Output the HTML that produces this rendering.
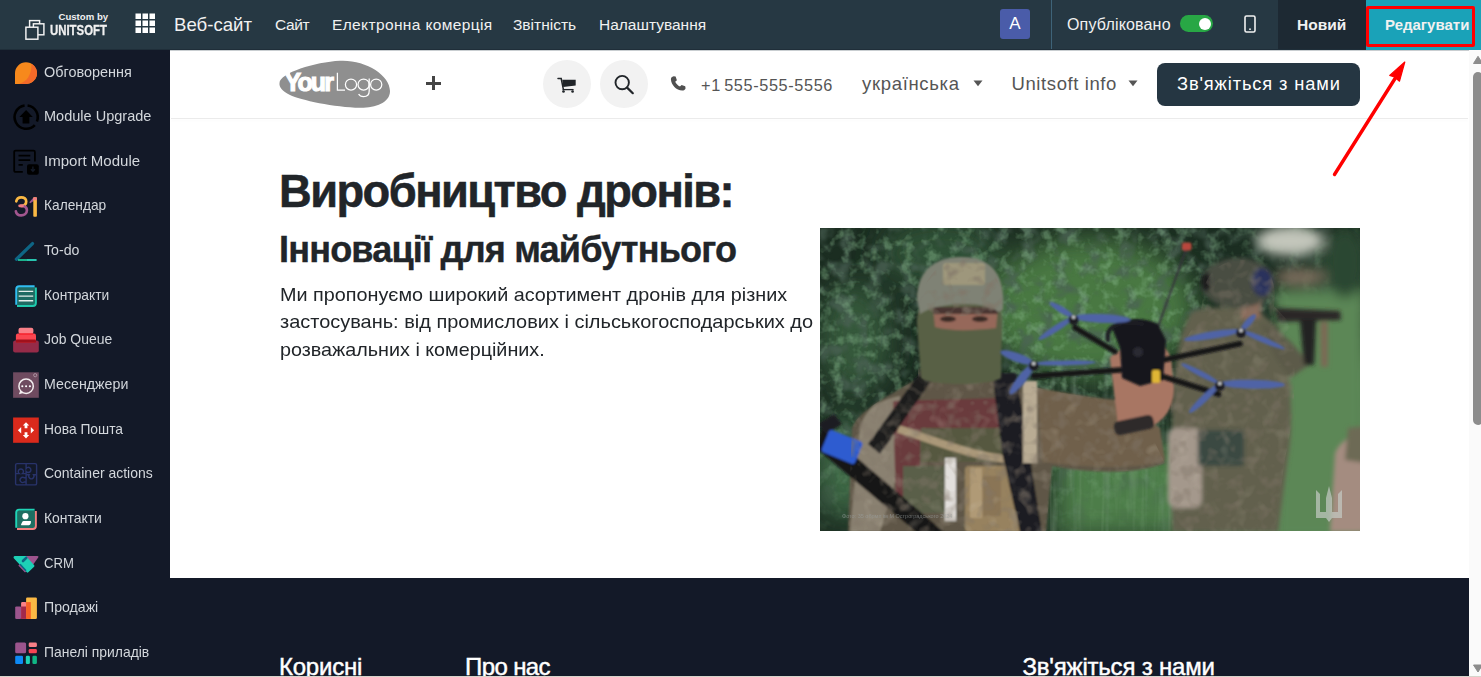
<!DOCTYPE html>
<html><head><meta charset="utf-8">
<style>
*{margin:0;padding:0;box-sizing:border-box}
html,body{width:1481px;height:677px;overflow:hidden;background:#fff;font-family:"Liberation Sans",sans-serif}
.a{position:absolute;white-space:nowrap}
#nav{position:absolute;left:0;top:0;width:1481px;height:50px;background:#263843}
#nav .t{position:absolute;color:#f1f1f1;white-space:nowrap;line-height:1}
#side{position:absolute;left:0;top:50px;width:170px;height:627px;background:#131928}
.si{position:absolute;left:44px;color:#d3d7dc;font-size:14.6px;line-height:1;white-space:nowrap}
.ic{position:absolute;left:14px;width:24px;height:24px}
#site{position:absolute;left:170px;top:50px;width:1299px;height:627px;background:#fff;overflow:hidden}
#hdr{position:absolute;left:0;top:0;width:1299px;height:68px;background:#fff;border-bottom:1px solid #e9e9e9}
.gr{color:#555}
#foot{position:absolute;left:0;top:528px;width:1299px;height:99px;background:#131928}
#sb{position:absolute;left:1469px;top:50px;width:12px;height:627px;background:#fbfbfb;border-left:1px solid #f0f0f0}
</style></head><body>
<div id="nav">
  <!-- logo -->
  <svg class="a" style="left:24px;top:18px" width="22" height="23" viewBox="0 0 22 23">
    <rect x="5.6" y="2.6" width="10" height="8" fill="none" stroke="#f4f4f4" stroke-width="1.45"/>
    <rect x="9.4" y="5.8" width="10.5" height="11" fill="#263843" stroke="#f4f4f4" stroke-width="1.45"/>
    <rect x="1.9" y="9.2" width="12" height="12" fill="#263843" stroke="#f4f4f4" stroke-width="1.45"/>
  </svg>
  <div class="t" style="left:58.5px;top:12px;font-size:9.6px;font-weight:bold">Custom by</div>
  <div class="t" style="left:50px;top:23px;font-size:14.8px;font-weight:bold;-webkit-text-stroke:0.3px #f1f1f1;transform:scaleX(0.77);transform-origin:0 0">UNITSOFT</div>
  <!-- grid -->
  <svg class="a" style="left:134.5px;top:13.3px" width="21" height="21" viewBox="0 0 21 21" fill="#fff">
    <rect x="0.5" y="0.5" width="5.5" height="5.5"/><rect x="7.5" y="0.5" width="5.5" height="5.5"/><rect x="14.5" y="0.5" width="5.5" height="5.5"/>
    <rect x="0.5" y="7.5" width="5.5" height="5.5"/><rect x="7.5" y="7.5" width="5.5" height="5.5"/><rect x="14.5" y="7.5" width="5.5" height="5.5"/>
    <rect x="0.5" y="14.5" width="5.5" height="5.5"/><rect x="7.5" y="14.5" width="5.5" height="5.5"/><rect x="14.5" y="14.5" width="5.5" height="5.5"/>
  </svg>
  <div class="t" style="left:174px;top:15.5px;font-size:18.6px">Веб-сайт</div>
  <div class="t" style="left:275px;top:17px;font-size:15.5px;letter-spacing:-0.35px">Сайт</div>
  <div class="t" style="left:332px;top:17px;font-size:15.5px;letter-spacing:0.37px">Електронна комерція</div>
  <div class="t" style="left:513px;top:17px;font-size:15.5px">Звітність</div>
  <div class="t" style="left:599px;top:17px;font-size:15.5px">Налаштування</div>
  <div class="a" style="left:1000px;top:8.5px;width:30px;height:30px;background:#4a5ca9;border-radius:3px;color:#fff;font-size:17px;line-height:30px;text-align:center">A</div>
  <div class="a" style="left:1051px;top:0;width:1px;height:50px;background:#3e6378"></div>
  <div class="t" style="left:1067px;top:16.7px;font-size:16px;letter-spacing:0.17px">Опубліковано</div>
  <div class="a" style="left:1180px;top:15px;width:33px;height:17px;background:#28a745;border-radius:9px"></div>
  <div class="a" style="left:1199px;top:17.5px;width:12px;height:12px;background:#fff;border-radius:50%"></div>
  <svg class="a" style="left:1243px;top:15px" width="14" height="18" viewBox="0 0 14 18">
    <rect x="2" y="1" width="10" height="16" rx="1.5" fill="none" stroke="#f1f1f1" stroke-width="1.6"/>
    <circle cx="7" cy="14.2" r="0.9" fill="#f1f1f1"/>
  </svg>
  <div class="a" style="left:1278px;top:0;width:88px;height:50px;background:#1d2933"></div>
  <div class="t" style="left:1297px;top:16.7px;font-size:15.5px;font-weight:bold">Новий</div>
  <div class="a" style="left:1366px;top:0;width:115px;height:50px;background:#1aa2b8"></div>
  <div class="a" style="left:1366px;top:49px;width:115px;height:1px;background:#1aa2b8"></div>
  <div class="t" style="left:1385px;top:17px;font-size:15px;font-weight:bold">Редагувати</div>
  <div class="a" style="left:1366px;top:6px;width:109px;height:41px;border:3.5px solid #f00;border-radius:2px"></div>
  <div class="a" style="left:0;top:49px;width:1366px;height:1px;background:#1f2e39"></div>
</div>

<div id="side">
  <svg class="a" style="left:10px;top:8px" width="32" height="32" viewBox="0 0 32 32"><path d="M5,26 L5,15.15 A10.95,10.85 0 1 1 15.95,26 Z" fill="#f7891c"/><path d="M21.6,5.7 A10.95,10.85 0 0 1 15.95,26 L8.5,26 C17,24 21.5,17 21.6,5.7 Z" fill="#f46a29"/></svg>
  <div class="si" style="top:14.5px;transform:scaleX(0.989);transform-origin:0 0">Обговорення</div>
  <svg class="a" style="left:10px;top:52px" width="32" height="32" viewBox="0 0 32 32"><g fill="none" stroke="#000" stroke-width="2.6"><path d="M17.6,3.5 A11.7,11.7 0 0 1 26.9,19.5"/><path d="M24.8,23.1 A11.7,11.7 0 1 1 14.6,3.5"/></g><path d="M16.1,8 L22.8,15.1 L19.4,15.1 L19.4,21.5 L12.6,21.5 L12.6,15.1 L9.4,15.1 Z" fill="#000"/></svg>
  <div class="si" style="top:59.2px;transform:scaleX(0.995);transform-origin:0 0">Module Upgrade</div>
  <svg class="a" style="left:10px;top:96px" width="32" height="32" viewBox="0 0 32 32"><g fill="none" stroke="#000" stroke-width="1.8"><path d="M12.8,25.9 L5.6,25.9 Q4.2,25.9 4.2,24.5 L4.2,6 Q4.2,4.6 5.6,4.6 L23.5,4.6 Q24.9,4.6 24.9,6 L24.9,15.6"/><path d="M8.5,9.7 H20.3 M8.5,14.2 H20.3 M8.5,18.9 H12.8"/></g><rect x="17" y="18.2" width="11.8" height="10.6" rx="2" fill="#000"/><path d="M22.9,20.5 V25 M20.9,23.2 L22.9,25.3 L24.9,23.2" stroke="#131a28" stroke-width="1.3" fill="none"/></svg>
  <div class="si" style="top:103.8px;transform:scaleX(1.030);transform-origin:0 0">Import Module</div>
  <svg class="a" style="left:10px;top:140px" width="32" height="32" viewBox="0 0 32 32"><g fill="none" stroke-width="2.7" stroke-linecap="round"><path d="M6.3,11.3 C6.8,8.4 9,7.3 11.3,7.3 C14.1,7.3 16.2,8.9 16.2,11.4 C16.2,13.9 14.4,15.8 11,15.8" stroke="#fbb944"/><path d="M11,15.8 C14.8,15.8 16.9,17.7 16.9,20.3 C16.9,23.4 14.2,25.3 11.2,25.3 C8.5,25.3 6.4,23.9 5.9,21.4" stroke="#a2568f"/><path d="M9.6,15.8 L12.6,15.8" stroke="#f27c85"/></g><path d="M19.3,12.3 L23.5,7.5 L25.3,7.5 L25.3,10 L20.2,13.3 Z" fill="#a2568f"/><rect x="23.3" y="7.2" width="3.6" height="19.6" rx="0.8" fill="#fbb944"/><rect x="23.3" y="7.2" width="3.6" height="3" rx="0.8" fill="#f27c85"/></svg>
  <div class="si" style="top:148.4px;transform:scaleX(0.942);transform-origin:0 0">Календар</div>
  <svg class="a" style="left:10px;top:185px" width="32" height="32" viewBox="0 0 32 32"><path d="M6.4,24.2 L22.5,8.6" stroke="#0e6585" stroke-width="3.3" stroke-linecap="round"/><path d="M8,25 H17" stroke="#1dc397" stroke-width="1.8"/><path d="M17,25 H26.6" stroke="#2bd9bf" stroke-width="1.8"/></svg>
  <div class="si" style="top:193.1px;transform:scaleX(0.973);transform-origin:0 0">To-do</div>
  <svg class="a" style="left:10px;top:229px" width="32" height="32" viewBox="0 0 32 32"><rect x="6.6" y="7.6" width="19" height="19" rx="2.2" fill="#1f6b63"/><path d="M6.2,25.8 L6.2,10.2 Q6.2,7.2 9.2,7.2 L24.6,7.2" fill="none" stroke="#31bdf1" stroke-width="1.9"/><path d="M7,27 L22.8,27 Q25.9,27 25.9,23.9 L25.9,8.6" fill="none" stroke="#1fcaae" stroke-width="1.9"/><path d="M8.7,12.4 H23.2 M8.7,17.1 H23.2 M8.7,21.8 H23.2" stroke="#e4eeec" stroke-width="1.4"/></svg>
  <div class="si" style="top:237.7px;transform:scaleX(0.945);transform-origin:0 0">Контракти</div>
  <svg class="a" style="left:10px;top:274px" width="32" height="32" viewBox="0 0 32 32"><rect x="3.1" y="16.5" width="25.7" height="11.9" rx="2" fill="#952b48"/><rect x="5.9" y="9.5" width="20.1" height="9.2" rx="2" fill="#fa4650"/><rect x="5.9" y="15.6" width="20.1" height="3.1" rx="1" fill="#a1111c"/><rect x="8.5" y="3.8" width="14.9" height="6.2" rx="2" fill="#f98088"/><rect x="9" y="9.2" width="14" height="1.6" fill="#f72630"/></svg>
  <div class="si" style="top:282.3px;transform:scaleX(0.956);transform-origin:0 0">Job Queue</div>
  <svg class="a" style="left:10px;top:318px" width="32" height="32" viewBox="0 0 32 32"><rect x="3.1" y="4.3" width="25.7" height="25.5" fill="#6f4b60"/><circle cx="16.1" cy="18.2" r="7.2" fill="none" stroke="#f3eef0" stroke-width="1.5"/><path d="M10.2,22.5 L9,26.2 L13.3,24.9 Z" fill="#f3eef0"/><circle cx="12.3" cy="18.2" r="1.05" fill="#fff"/><circle cx="16.1" cy="18.2" r="1.05" fill="#fff"/><circle cx="19.9" cy="18.2" r="1.05" fill="#fff"/><circle cx="25.2" cy="7.2" r="1.6" fill="none" stroke="#b7a1ad" stroke-width="0.8"/></svg>
  <div class="si" style="top:327.0px;transform:scaleX(0.974);transform-origin:0 0">Месенджери</div>
  <svg class="a" style="left:10px;top:363px" width="32" height="32" viewBox="0 0 32 32"><rect x="3.1" y="4.5" width="25.7" height="25.3" fill="#da2a1c"/><g fill="#fff"><path d="M16,9.2 L19.2,12.5 L17.4,12.5 L17.4,15.3 L14.6,15.3 L14.6,12.5 L12.8,12.5 Z"/><path d="M16,25.4 L19.2,22.1 L17.4,22.1 L17.4,19.3 L14.6,19.3 L14.6,22.1 L12.8,22.1 Z"/><path d="M7.9,17.3 L11.2,14 L11.2,20.6 Z"/><path d="M24.1,17.3 L20.8,14 L20.8,20.6 Z"/></g></svg>
  <div class="si" style="top:371.6px;transform:scaleX(0.948);transform-origin:0 0">Нова Пошта</div>
  <svg class="a" style="left:10px;top:407px" width="32" height="32" viewBox="0 0 32 32"><g fill="none" stroke="#28336a" stroke-width="1.4"><rect x="5.6" y="6.6" width="21" height="21.3" rx="1.5"/><path d="M16.1,6.6 V11.5 A2.6,2.6 0 1 1 16.1,14.3 V27.9"/><path d="M5.6,16.6 H9.2 A2.6,2.6 0 1 1 12.5,16.6 H16.1"/><path d="M16.1,17.7 H19.2 A2.6,2.6 0 1 0 23.5,17.7 H26.6"/><path d="M16.1,25 H14.2 A2.6,2.6 0 1 1 14.2,20.8 H16.1"/></g></svg>
  <div class="si" style="top:416.2px;transform:scaleX(0.957);transform-origin:0 0">Container actions</div>
  <svg class="a" style="left:10px;top:452px" width="32" height="32" viewBox="0 0 32 32"><rect x="6.6" y="8.3" width="19" height="19" rx="2.2" fill="#1e6f62"/><path d="M6.2,25.8 L6.2,10.6 Q6.2,7.6 9.2,7.6 L24.6,7.6" fill="none" stroke="#1fd4b6" stroke-width="1.9"/><path d="M7,27 L22.8,27 Q25.9,27 25.9,23.9 L25.9,9" fill="none" stroke="#f5817f" stroke-width="1.9"/><circle cx="15.4" cy="14.2" r="3.1" fill="#fff"/><path d="M11.3,23.2 L18.8,23.2 Q20.2,23.2 20.6,21.8 L21,19.8 Q21.2,19.1 20.4,19.1 L13.9,19.1 Q12.5,19.1 12,20.5 L11,22.6 Z" fill="#fff"/></svg>
  <div class="si" style="top:460.8px;transform:scaleX(0.953);transform-origin:0 0">Контакти</div>
  <svg class="a" style="left:10px;top:496px" width="32" height="32" viewBox="0 0 32 32"><path d="M15.5,10 L27.4,10 Q29.2,10 28.2,11.5 L22.5,19.5 L16,12 Z" fill="#9d548e"/><path d="M8.3,19.6 L15,26.5 L17.5,24 L10.5,17.5 Z" fill="#9d548e"/><path d="M4.5,10 L15.9,10 L24.2,19.2 Q24.8,20 24.1,20.7 L18.3,26.3 Q17.5,27 16.8,26.3 L10.5,19.5 L3.8,12.3 Q2.8,11 4.5,10 Z" fill="#1dd0b6"/><path d="M13,15 L16.2,11.8" stroke="#0c6583" stroke-width="2.6" stroke-linecap="round"/><path d="M10,18.3 L16,24.8" stroke="#0c6583" stroke-width="1.6"/></svg>
  <div class="si" style="top:505.5px;transform:scaleX(0.900);transform-origin:0 0">CRM</div>
  <svg class="a" style="left:10px;top:541px" width="32" height="32" viewBox="0 0 32 32"><rect x="16.1" y="6.6" width="10.8" height="21.3" rx="1.2" fill="#fbb944"/><rect x="5.2" y="15.4" width="6" height="12.5" rx="1.2" fill="#9b548d"/><rect x="11.1" y="11.1" width="5.2" height="16.8" rx="1.2" fill="#f98088"/><rect x="11.1" y="15.5" width="5" height="12.4" fill="#a1294b"/><rect x="16.1" y="11.1" width="4.7" height="16.8" fill="#f76226"/></svg>
  <div class="si" style="top:550.1px;transform:scaleX(0.968);transform-origin:0 0">Продажі</div>
  <svg class="a" style="left:10px;top:586px" width="32" height="32" viewBox="0 0 32 32"><rect x="5.2" y="6.6" width="10.9" height="10.6" rx="1.5" fill="#9b548d"/><rect x="18.7" y="6.6" width="8.2" height="4.4" rx="1.3" fill="#f98088"/><rect x="18.7" y="12.9" width="8.2" height="4.3" rx="1.3" fill="#f74453"/><rect x="5.2" y="19.8" width="7.8" height="8.3" rx="1.3" fill="#0d8af6"/><rect x="15.8" y="19.8" width="4.1" height="8.3" rx="1.3" fill="#1ed3b5"/><rect x="22.4" y="19.8" width="4.5" height="8.3" rx="1.3" fill="#10b684"/></svg>
  <div class="si" style="top:594.7px;transform:scaleX(0.953);transform-origin:0 0">Панелі приладів</div>
</div>

<div id="site"></div>
<div class="a" style="left:170px;top:50px;width:1311px;height:1px;background:#c9ced1"></div>
<div id="hdrline" class="a" style="left:171px;top:118px;width:1297px;height:1px;background:#ebebeb;box-shadow:0 2px 3px rgba(0,0,0,0.035)"></div>
<!-- logo -->
<svg class="a" style="left:270px;top:55px" width="130" height="60" viewBox="270 55 130 60">
  <path d="M279.5,83 C280,73 315,62 340,60.8 C365,59.5 390,75 390,91 C390,103 375,108 360,107.8 C335,107.5 300,100 290,95 C282,91 279,87 279.5,83 Z" fill="#8f8f8f"/>
  <text x="284.5" y="90.7" font-family="Liberation Sans" font-weight="bold" font-size="25" letter-spacing="-1.9" fill="#fff" stroke="#fff" stroke-width="1.1">Your</text><path d="M284,73.2 L290,73 L289,76.5 Z" fill="#fff"/>
  <g fill="none" stroke="#fff" stroke-width="1.25">
    <path d="M337.4,72.8 V90.1 H345"/>
    <circle cx="351" cy="84.6" r="5.6"/>
    <circle cx="363.6" cy="84.6" r="5.6"/>
    <path d="M369.2,78.6 V91 C369.2,95 366.5,96.6 363.6,96.6 C361.2,96.6 359.4,95.5 358.6,94"/>
    <circle cx="376.2" cy="84.6" r="5.6"/>
  </g>
</svg>
<div class="a" style="left:426px;top:81.8px;width:15.3px;height:2.9px;background:#454545"></div>
<div class="a" style="left:432.2px;top:75.7px;width:2.9px;height:14.8px;background:#454545"></div>
<div class="a" style="left:543px;top:59.8px;width:48px;height:48px;border-radius:50%;background:#f2f2f2"></div>
<div class="a" style="left:600px;top:59.8px;width:48px;height:48px;border-radius:50%;background:#f2f2f2"></div>
<svg class="a" style="left:550px;top:70px" width="100" height="30" viewBox="550 70 100 30">
  <path d="M558,78.5 H561.2 L563.4,89.6" fill="none" stroke="#212529" stroke-width="1.5" stroke-linecap="round"/>
  <path d="M562.3,79.8 H575.7 V85.4 L563.2,87.1 Z" fill="#212529"/>
  <path d="M562.7,89.6 H573.6" stroke="#212529" stroke-width="1.3"/>
  <circle cx="563.5" cy="91.5" r="1.35" fill="#212529"/><circle cx="572.6" cy="91.5" r="1.35" fill="#212529"/>
  <circle cx="622.2" cy="82.6" r="6.7" fill="none" stroke="#212529" stroke-width="1.9"/>
  <path d="M627.1,87.6 L632.8,93.2" stroke="#212529" stroke-width="2.2" stroke-linecap="round"/>
</svg>
<svg class="a" style="left:665px;top:71px" width="28" height="24" viewBox="665 71 28 24">
  <path d="M673.6,76.3 L675.6,76.6 L676.9,80.2 L675.2,81.7 C676.2,83.8 677.9,85.5 680,86.5 L681.6,84.9 L685.2,86.2 L685.6,88.3 C685.2,89.9 683.8,90.6 682.3,90.6 C676.2,90.2 671.3,85.3 670.9,79.3 C670.9,77.8 671.9,76.6 673.6,76.3 Z" fill="#505050"/>
</svg>
<div class="a gr" style="left:701px;top:76.8px;font-size:16.3px;line-height:1;letter-spacing:0.62px;word-spacing:-1.8px;color:#555">+1 555-555-5556</div>
<div class="a gr" style="left:862px;top:75px;font-size:18.5px;line-height:1;letter-spacing:0.68px;color:#555">українська</div>
<svg class="a" style="left:973px;top:80px" width="10" height="7" viewBox="0 0 10 7"><path d="M0.5,0.4 H9.5 L5,6.2 Z" fill="#555"/></svg>
<div class="a gr" style="left:1011.5px;top:75px;font-size:18.5px;line-height:1;letter-spacing:0.6px;color:#555">Unitsoft info</div>
<svg class="a" style="left:1128px;top:80px" width="10" height="7" viewBox="0 0 10 7"><path d="M0.5,0.4 H9.5 L5,6.2 Z" fill="#555"/></svg>
<div class="a" style="left:1157px;top:63px;width:203px;height:43px;border-radius:8px;background:#253642"></div>
<div class="a" style="left:1177px;top:75px;font-size:18.3px;line-height:1;letter-spacing:0.87px;color:#fff">Зв'яжіться з нами</div>

<div class="a h1" style="left:279px;top:169.2px;font-size:45.3px;line-height:1;font-weight:bold;letter-spacing:-1.55px;-webkit-text-stroke:0.5px #212529;color:#212529">Виробництво дронів:</div>
<div class="a h2" style="left:279px;top:231.9px;font-size:36.1px;line-height:1;font-weight:bold;letter-spacing:-0.82px;-webkit-text-stroke:0.35px #212529;color:#212529">Інновації для майбутнього</div>
<div class="a p1" style="left:280px;top:285.5px;font-size:18.4px;line-height:1;color:#212529;transform:scaleX(1.076);transform-origin:0 0">Ми пропонуємо широкий асортимент дронів для різних</div>
<div class="a p2" style="left:280px;top:313.4px;font-size:18.4px;line-height:1;color:#212529;transform:scaleX(1.085);transform-origin:0 0">застосувань: від промислових і сільськогосподарських до</div>
<div class="a p3" style="left:280px;top:340.8px;font-size:18.4px;line-height:1;color:#212529;transform:scaleX(1.074);transform-origin:0 0">розважальних і комерційних.</div>

<div id="photo" class="a" style="left:819.5px;top:228px;width:540.5px;height:303px;background:#203426;overflow:hidden"><svg width="541" height="303" viewBox="0 0 541 303">
<defs>
 <filter id="b1" x="-20%" y="-20%" width="140%" height="140%"><feGaussianBlur stdDeviation="0.9"/></filter>
 <filter id="b2" x="-20%" y="-20%" width="140%" height="140%"><feGaussianBlur stdDeviation="2"/></filter>
 <filter id="b5" x="-50%" y="-50%" width="200%" height="200%"><feGaussianBlur stdDeviation="6"/></filter>
 <filter id="b12" x="-50%" y="-50%" width="200%" height="200%"><feGaussianBlur stdDeviation="14"/></filter>
 <filter id="leaf" x="0" y="0" width="100%" height="100%">
   <feTurbulence type="fractalNoise" baseFrequency="0.085" numOctaves="3" seed="4" result="n"/>
   <feColorMatrix in="n" type="matrix" values="0 0 0 0 0.27  0 0 0 0 0.52  0 0 0 0 0.29  0 0 0 3.4 -1.65" result="c"/>
   <feGaussianBlur in="c" stdDeviation="0.6"/>
 </filter>
 <filter id="dark" x="0" y="0" width="100%" height="100%">
   <feTurbulence type="fractalNoise" baseFrequency="0.06" numOctaves="3" seed="21" result="n"/>
   <feColorMatrix in="n" type="matrix" values="0 0 0 0 0.07  0 0 0 0 0.12  0 0 0 0 0.09  0 0 0 -4 2.1" result="c"/>
   <feGaussianBlur in="c" stdDeviation="1"/>
 </filter>
 <filter id="grass" x="0" y="0" width="100%" height="100%">
   <feTurbulence type="fractalNoise" baseFrequency="0.16 0.015" numOctaves="2" seed="7" result="n"/>
   <feColorMatrix in="n" type="matrix" values="0 0 0 0 0.55  0 0 0 0 0.72  0 0 0 0 0.55  0 0 0 3 -1.5" result="c"/>
   <feGaussianBlur in="c" stdDeviation="0.6"/>
 </filter>
 <filter id="grassd" x="0" y="0" width="100%" height="100%">
   <feTurbulence type="fractalNoise" baseFrequency="0.12 0.012" numOctaves="2" seed="9" result="n"/>
   <feColorMatrix in="n" type="matrix" values="0 0 0 0 0.2  0 0 0 0 0.32  0 0 0 0 0.22  0 0 0 -3 1.6" result="c"/>
   <feGaussianBlur in="c" stdDeviation="0.6"/>
 </filter>
 <filter id="camo" x="0" y="0" width="100%" height="100%">
   <feTurbulence type="fractalNoise" baseFrequency="0.07" numOctaves="2" seed="11" result="n"/>
   <feColorMatrix in="n" type="matrix" values="0 0 0 0 0.62  0 0 0 0 0.56  0 0 0 0 0.45  0 0 0 3.5 -1.9" result="c"/>
   <feGaussianBlur in="c" stdDeviation="0.7"/>
 </filter>
 <filter id="camod" x="0" y="0" width="100%" height="100%">
   <feTurbulence type="fractalNoise" baseFrequency="0.08" numOctaves="2" seed="15" result="n"/>
   <feColorMatrix in="n" type="matrix" values="0 0 0 0 0.22  0 0 0 0 0.18  0 0 0 0 0.14  0 0 0 -3.5 1.8" result="c"/>
   <feGaussianBlur in="c" stdDeviation="0.7"/>
 </filter>
 <radialGradient id="tg" cx="0.25" cy="0.2" r="0.95"><stop offset="0.45" stop-color="#fff"/><stop offset="0.85" stop-color="#333"/></radialGradient>
 <mask id="topmask" maskUnits="userSpaceOnUse" x="0" y="0" width="541" height="303"><rect width="541" height="303" fill="url(#tg)"/></mask>
 <clipPath id="lsold"><path d="M28,304 L32,200 C40,180 70,168 98,150 L98,90 C98,55 120,30 140,30 C165,30 183,45 182,80 L180,150 C215,160 250,168 300,172 L330,205 L345,235 C320,246 272,246 232,238 L226,304 Z"/></clipPath>
 <clipPath id="rsold"><path d="M352,304 L350,210 C350,150 360,110 380,92 L384,60 C390,38 410,30 428,32 C445,34 458,48 454,78 L470,95 C478,130 475,190 465,230 L455,304 Z"/></clipPath>
</defs>
<rect width="541" height="303" fill="#1b2d21"/>
<g filter="url(#b12)">
  <ellipse cx="270" cy="80" rx="105" ry="70" fill="#4a7843"/>
  <ellipse cx="120" cy="25" rx="60" ry="35" fill="#2f4f35"/>
  <ellipse cx="35" cy="110" rx="35" ry="55" fill="#34583a"/>
  <ellipse cx="25" cy="240" rx="30" ry="50" fill="#3c6844"/>
  <rect x="400" y="125" width="150" height="190" fill="#5a8a57"/>
  <rect x="235" y="215" width="160" height="95" fill="#4e7d49"/>
  
  <ellipse cx="515" cy="55" rx="28" ry="40" fill="#2b4630"/>
  
</g>
<rect width="541" height="303" filter="url(#dark)" opacity="0.75" mask="url(#topmask)"/>
<rect width="541" height="303" filter="url(#leaf)" opacity="0.42" mask="url(#topmask)"/>
<rect x="230" y="140" width="311" height="163" filter="url(#grassd)" opacity="0.3"/>
<rect x="230" y="140" width="311" height="163" filter="url(#grass)" opacity="0.12"/>

<!-- right soldier -->
<g filter="url(#b5)">
  <ellipse cx="470" cy="13" rx="34" ry="15" fill="#c3c6bb"/>
  <ellipse cx="480" cy="49" rx="26" ry="9" fill="#786a5a"/>
  <rect x="455" y="62" width="90" height="250" fill="#5b8756"/>
  <ellipse cx="525" cy="35" rx="20" ry="35" fill="#2a4630"/>
</g>
<g filter="url(#b2)">
  <path d="M352,304 L352,200 C352,140 360,100 372,84 C385,78 420,78 440,84 L458,100 C470,130 475,190 468,230 L458,304 Z" fill="#62604d"/>
  <path d="M440,95 C455,100 470,110 480,125 L492,135 L470,150 L455,130 Z" fill="#5c5a48"/>
  <rect x="348" y="200" width="34" height="80" rx="8" fill="#a4988c"/>
  <rect x="378" y="202" width="46" height="36" rx="4" fill="#3b4843"/>
  <path d="M420,66 L442,70 L440,90 L422,92 Z" fill="#8c6c5c"/>
  <ellipse cx="418" cy="55" rx="37" ry="25" fill="#484d43"/>
  <ellipse cx="442" cy="54" rx="10" ry="14" fill="#2c305c"/>
  <ellipse cx="386" cy="54" rx="5" ry="10" fill="#1d1d1f"/>
  <path d="M455,80 L520,83 L521,92 L458,94 Z" fill="#2a2828"/>
  <path d="M480,92 L496,92 L494,137 L484,137 Z" fill="#242220"/>
  <path d="M500,94 L508,94 L508,139 L501,139 Z" fill="#7a6a55"/>
</g>
<g clip-path="url(#rsold)">
<rect x="340" y="30" width="140" height="274" filter="url(#camo)" opacity="0.15"/>
<rect x="340" y="30" width="140" height="274" filter="url(#camod)" opacity="0.4"/>
</g>

<!-- left soldier body -->
<g filter="url(#b1)">
  <path d="M28,304 L32,200 C40,180 70,168 98,150 L180,150 C215,160 250,168 300,172 L330,205 L345,235 C320,246 272,246 232,238 L226,304 Z" fill="#5f5646"/>
  <path d="M40,200 C45,180 60,172 80,168 L82,230 L60,304 L30,304 Z" fill="#8a8171"/>
  <path d="M73,173 L182,170 L186,206 L100,206 L100,275 L76,278 Z" fill="#6b3a3c"/>
  <rect x="101" y="200" width="90" height="34" fill="#56593f"/>
  <path d="M78,201 C110,210 145,228 195,232" stroke="#aa9879" stroke-width="8" fill="none"/>
  <rect x="83" y="238" width="44" height="47" fill="#5a5e48"/>
  <rect x="145" y="238" width="60" height="66" rx="4" fill="#97825f"/>
  <rect x="150" y="240" width="12" height="50" fill="#b09a76"/>
  <rect x="163" y="248" width="18" height="40" fill="#8a7556"/>
  <rect x="125" y="230" width="11" height="63" fill="#e2dfdc"/>
  <path d="M101,143 L48,216 L60,226 L113,151 Z" fill="#1a1a1f"/>
  <path d="M172,145 L196,145 L222,304 L200,304 L182,225 Z" fill="#1c1c21"/>
  <rect x="203" y="153" width="14" height="82" fill="#b9ac94"/>
  <path d="M217,160 C250,165 280,172 300,172 L340,200 L345,232 C320,242 270,240 222,234 Z" fill="#6f604c"/>
  <path d="M2,200 L124,304 L96,304 L-4,220 Z" fill="#151519"/><path d="M-2,196 L14,186 L22,196 L6,206 Z" fill="#1d1d22"/>
  <rect x="4" y="207" width="36" height="24" rx="3" fill="#2d5bd0" transform="rotate(22 22 219)"/>
</g>
<g clip-path="url(#lsold)">
<rect x="25" y="140" width="330" height="164" filter="url(#camo)" opacity="0.2"/>
<rect x="25" y="140" width="330" height="164" filter="url(#camod)" opacity="0.45"/>
</g>
<!-- head -->
<g filter="url(#b1)">
  <path d="M97,95 C97,72 112,64 140,64 C168,64 184,72 182,95 L181,150 C170,158 110,158 101,150 Z" fill="#596045"/>
  <path d="M113,79 L178,79 L176,100 C150,103 130,103 115,99 Z" fill="#96685a"/>
  <path d="M113,79 L178,79 L178,86 L113,86 Z" fill="#4a3530"/>
  <ellipse cx="128" cy="91" rx="8" ry="3" fill="#3b2a25"/>
  <ellipse cx="160" cy="91" rx="8" ry="3" fill="#3b2a25"/>
  <path d="M97,72 C97,45 112,30 140,29 C170,28 186,45 183,82 L178,84 C170,73 118,73 100,86 Z" fill="#7f8274"/>
  <rect x="123" y="35" width="42" height="22" rx="3" fill="#9e977c"/>
</g>
<rect x="95" y="28" width="90" height="60" filter="url(#camod)" opacity="0.7" clip-path="url(#lsold)"/>
<!-- hand -->
<g filter="url(#b1)">
  <path d="M290,130 C298,120 318,114 336,116 C346,118 352,126 352,140 L354,160 C354,180 344,196 322,202 L298,198 Z" fill="#a87664"/>
  <rect x="294" y="190" width="40" height="14" rx="5" fill="#2e2a2a" transform="rotate(-12 314 197)"/>
</g>
<!-- drone -->
<g filter="url(#b1)" stroke-linecap="round">
  <path d="M366.6,20 L338.6,97" stroke="#34343a" stroke-width="2"/>
  <rect x="362" y="14.5" width="9.5" height="8" rx="2" fill="#b8463e"/>
  <path d="M300,142 L213.7,148 M295,123.6 L255,99.7 M345,131.6 L420,115.7 M340,147.6 L398.5,166.2" stroke="#141418" stroke-width="5.5" fill="none"/>
  <path d="M292,100 C300,90 322,88 338,96 L346,112 L343,152 L320,158 L302,150 L300,120 Z" fill="#18181e"/>
  <path d="M288,112 C285,98 300,92 322,96" stroke="#1c1c24" stroke-width="4" fill="none"/>
  <circle cx="318" cy="124" r="5" fill="#2a2a33"/>
  <rect x="332" y="142" width="8" height="13" rx="1.5" fill="#e0b636"/>
  <g fill="#4f64a6">
    <ellipse cx="241.6" cy="81.8" rx="14.0" ry="3.2" transform="rotate(-148.6 241.6 81.8)"/><ellipse cx="282.1" cy="90.4" rx="28.6" ry="4.5" transform="rotate(2.6 282.1 90.4)"/><ellipse cx="236.1" cy="100.4" rx="20.9" ry="3.2" transform="rotate(147.2 236.1 100.4)"/><ellipse cx="197.1" cy="129.6" rx="17.7" ry="4.5" transform="rotate(-160.1 197.1 129.6)"/><ellipse cx="244.8" cy="134.9" rx="31.2" ry="2.5" transform="rotate(-1.2 244.8 134.9)"/><ellipse cx="201.8" cy="150.9" rx="19.4" ry="4.5" transform="rotate(128.0 201.8 150.9)"/><ellipse cx="392.4" cy="107.1" rx="28.9" ry="3.8" transform="rotate(170.7 392.4 107.1)"/><ellipse cx="428.3" cy="94.5" rx="10.8" ry="3.2" transform="rotate(-47.4 428.3 94.5)"/><ellipse cx="442.9" cy="111.7" rx="23.8" ry="2.8" transform="rotate(23.0 442.9 111.7)"/><ellipse cx="380.5" cy="145.6" rx="21.7" ry="2.8" transform="rotate(-152.7 380.5 145.6)"/><ellipse cx="432.4" cy="156.2" rx="32.6" ry="4.5" transform="rotate(1.2 432.4 156.2)"/><ellipse cx="384.5" cy="170.2" rx="21.2" ry="3.5" transform="rotate(136.2 384.5 170.2)"/>
  </g>
  <g fill="#1c1c22"><circle cx="253.6" cy="92" r="5"/><circle cx="213.7" cy="138" r="5"/><circle cx="421" cy="105" r="5"/><circle cx="399.8" cy="158" r="5"/></g>
  <g fill="#cfd2d6"><circle cx="253.6" cy="89.1" r="1.8"/><circle cx="213.7" cy="135.6" r="1.8"/><circle cx="421" cy="102.4" r="1.8"/><circle cx="399.8" cy="155.5" r="1.8"/></g>
</g>
<!-- bottom right figure -->
<g filter="url(#b2)">
  <path d="M515,225 C520,212 535,205 545,205 L545,304 L510,304 Z" fill="#a48c80"/>
  <path d="M528,200 L545,198 L545,235 L525,232 Z" fill="#6d6a55"/>
</g>
<g fill="#c5cbc4" opacity="0.7">
  <path d="M496,262 L500,266 V284 H506 V270 L509,258 L512,270 V284 H518 V266 L522,262 V290 H512 L509,294 L506,290 H496 Z"/>
</g>
<text x="22" y="290" font-family="Liberation Sans" font-size="5.5" fill="#9aa0a0" opacity="0.6">Фото: 35 обрмп ім М Остроградського 2024</text>
</svg></div>

<div class="a" style="left:170px;top:577.5px;width:1299px;height:100px;background:#131928"></div>
<div class="a" style="left:279px;top:654.5px;-webkit-text-stroke:0.45px #fff;font-size:24px;line-height:1;letter-spacing:-0.23px;color:#fff">Корисні</div>
<div class="a" style="left:465px;top:654.5px;-webkit-text-stroke:0.45px #fff;font-size:24px;line-height:1;letter-spacing:-0.6px;color:#fff">Про нас</div>
<div class="a" style="left:1022.5px;top:654.5px;-webkit-text-stroke:0.45px #fff;font-size:24px;line-height:1;letter-spacing:-0.2px;color:#fff">Зв'яжіться з нами</div>
<div class="a" style="left:0;top:676px;width:1481px;height:1px;background:#d6d4cb"></div>


<div id="sbtrack" class="a" style="left:1469px;top:50px;width:12px;height:626px;background:#fafafa"></div>
<svg class="a" style="left:1469px;top:50px" width="12" height="626" viewBox="1469 50 12 626">
  <path d="M1478,56.3 L1482.5,63.5 H1473.5 Z" fill="#8c8c8c" stroke="#8c8c8c" stroke-width="1" stroke-linejoin="round"/>
  <rect x="1473" y="72" width="10" height="353" rx="5" fill="#8c8c8c"/>
  <path d="M1478,672 L1482.5,665 H1473.5 Z" fill="#8c8c8c" stroke="#8c8c8c" stroke-width="1" stroke-linejoin="round"/>
</svg>
<svg class="a" style="left:1320px;top:50px" width="100" height="140" viewBox="1320 50 100 140">
  <path d="M1334.5,174.5 L1396,77" stroke="#f00" stroke-width="3.4" stroke-linecap="round"/>
  <path d="M1404.8,62 L1389.7,75.4 L1394.5,77 L1399.5,81.2 Z" fill="#f00" stroke="#f00" stroke-width="1.2" stroke-linejoin="round"/>
</svg>

</body></html>
